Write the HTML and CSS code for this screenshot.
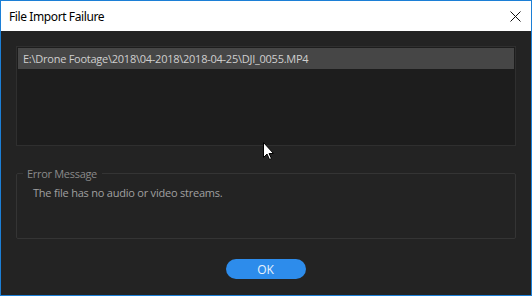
FILE: index.html
```html
<!DOCTYPE html>
<html lang="en">
  <head>
    <meta charset="UTF-8" />
    <title>File Import Failure</title>
    <link rel="stylesheet" href="styles.css">
  </head>
  <body>
    <div class="window">
      <div class="titlebar">
        <span class="title">File Import Failure</span>
        <svg class="close" width="11" height="11" viewBox="0 0 11 11">
          <path d="M0.5 0.5 L10.5 10.5 M10.5 0.5 L0.5 10.5" stroke="#111" stroke-width="1" fill="none" />
        </svg>
      </div>

      <div class="content">
        <div class="file-list">
          <div class="file-row">E:\Drone Footage\2018\04-2018\2018-04-25\DJI_0055.MP4</div>
        </div>

        <fieldset class="error-box">
          <legend>Error Message</legend>
          <p>The file has no audio or video streams.</p>
        </fieldset>

        <div class="actions">
          <button>OK</button>
        </div>
      </div>

      <!-- mouse pointer -->
      <svg class="pointer" width="12" height="19" viewBox="0 0 12 19">
        <path d="M0.5 0.5 L0.5 15.5 L4 12 L6.5 17.5 L8.5 16.5 L6 11.5 L10.5 11.5 Z" fill="#fff" stroke="#000" stroke-width="1" />
      </svg>
    </div>
  </body>
</html>
```

FILE: styles.css
```css
* {
  box-sizing: border-box;
}
body {
  margin: 0;
  width: 532px;
  height: 296px;
  overflow: hidden;
  font-family: "Open Sans", sans-serif;
}
.window {
  position: relative;
  width: 532px;
  height: 296px;
  border: 1px solid #1c7fd6;
  background-color: #232323;
  display: flex;
  flex-direction: column;
}
.titlebar {
  height: 30px;
  background-color: #fff;
  display: flex;
  align-items: center;
  justify-content: space-between;
  padding: 0 10px 0 8px;
}
.title {
  font-family: "Noto Sans", sans-serif;
  font-size: 12px;
  letter-spacing: -0.4px;
  color: #000;
}
.close {
  display: block;
}
.content {
  flex: 1;
  padding: 15px 15px 0 15px;
  display: flex;
  flex-direction: column;
}
.file-list {
  height: 100px;
  background-color: #1d1d1d;
  border: 1px solid #2f2f2f;
  padding: 1px 1px;
}
.file-row {
  height: 21px;
  line-height: 21px;
  padding-left: 5px;
  background-color: #464646;
  color: #cfcfcf;
  font-size: 11px;
  letter-spacing: -0.25px;
}
.error-box {
  margin: 20px 0 0 0;
  height: 73px;
  border: 1px solid #343434;
  border-radius: 2px;
  padding: 0 10px 0 6px;
}
.error-box legend {
  padding: 0 5px 0 4px;
  color: #8a8a8a;
  font-size: 11px;
  letter-spacing: -0.3px;
}
.error-box p {
  margin: 4px 0 0 10px;
  color: #a0a0a0;
  font-size: 11px;
  letter-spacing: -0.22px;
}
.actions {
  display: flex;
  justify-content: center;
  margin-top: 20px;
  padding-right: 1px;
}
button {
  width: 80px;
  height: 20px;
  border: none;
  border-radius: 10px;
  background-color: #2d8ceb;
  color: #e8f2fc;
  font-family: "Open Sans", sans-serif;
  font-size: 12px;
  padding: 0;
}
.pointer {
  position: absolute;
  left: 262px;
  top: 141px;
}
```
